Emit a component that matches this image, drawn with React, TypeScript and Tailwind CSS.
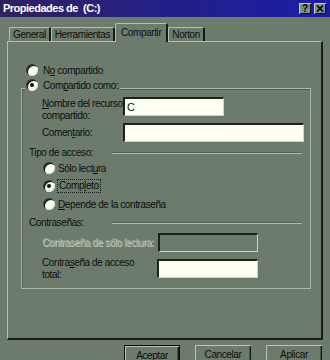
import React from 'react';

const face = 'bg-[#6c7b6c]';

function Radio({ checked }: { checked?: boolean }) {
  return (
    <span className="flex h-[12px] w-[12px] shrink-0 items-center justify-center rounded-full bg-[#fbfbef] shadow-[inset_1px_1px_0_#3d473e,inset_2px_2px_0_#141a14,inset_-1px_-1px_0_#d9e2d8]">
      {checked && <span className="h-[4px] w-[4px] rounded-full bg-[#0c0c0c]" />}
    </span>
  );
}

function Field({ width, value, disabled }: { width: string; value?: string; disabled?: boolean }) {
  return (
    <div
      className={`h-[19px] shrink-0 border-t-2 border-l-2 border-r border-b border-t-[#1b211b] border-l-[#1b211b] border-r-[#c9d4c8] border-b-[#c9d4c8] pl-[2px] text-[11px] leading-[16px] tracking-normal ${width} ${
        disabled ? 'bg-[#6c7b6c]' : 'bg-[#fffff2]'
      }`}
    >
      {value}
    </div>
  );
}

function Separator() {
  return (
    <div className="mr-[8px] flex flex-1 items-center">
      <div className="h-[2px] flex-1 border-t border-b border-t-[#56635a] border-b-[#aebcad]" />
    </div>
  );
}

function Tab({ label, selected }: { label: string; selected?: boolean }) {
  if (selected) {
    return (
      <div
        className={`relative z-10 -mb-[1px] -mx-[2px] flex h-[19px] items-start rounded-t-[2px] border-t border-l border-r-2 border-t-[#b2c0b1] border-l-[#b2c0b1] border-r-[#151a15] ${face} px-[5px] pt-[2px]`}
      >
        {label}
      </div>
    );
  }
  return (
    <div className="flex h-[14px] items-start rounded-t-[2px] border-t border-l border-r-2 border-t-[#b2c0b1] border-l-[#b2c0b1] border-r-[#151a15] px-[3px] pt-0">
      {label}
    </div>
  );
}

function Button({ label, isDefault }: { label: string; isDefault?: boolean }) {
  return (
    <div
      className={`flex h-[23px] w-[56px] items-start justify-center pt-[3px] ${
        isDefault ? 'border border-[#0a0d0a]' : ''
      } shadow-[inset_1px_1px_0_#b8c6b7,inset_-1px_-1px_0_#121712,inset_-2px_-2px_0_#4a564b]`}
    >
      {label}
    </div>
  );
}

export default function App() {
  return (
    <div
      className={`flex h-[360px] w-[330px] flex-col overflow-hidden ${face} font-['Liberation_Sans',Arial,sans-serif] text-[10px] leading-[13px] tracking-[-0.4px] text-[#0d100d]`}
    >
      {/* Title bar */}
      <div className="flex h-[17px] shrink-0 items-center bg-linear-to-r from-[#2e2160] via-[#231f86] to-[#1a1ca8] pl-[3px] pr-[4px]">
        <span className="flex-1 whitespace-nowrap text-[11px] font-bold tracking-[-0.5px] text-white">
          Propiedades de&nbsp;&nbsp;(C:)
        </span>
        <div className="flex gap-[3px]">
          <div className="flex h-[11px] w-[12px] items-center justify-center bg-[#7e8e7f] text-[10px] font-bold leading-none tracking-normal text-black shadow-[inset_1px_1px_0_#c2cfc1,inset_-1px_-1px_0_#111]">
            ?
          </div>
          <div className="flex h-[11px] w-[12px] items-center justify-center bg-[#7e8e7f] shadow-[inset_1px_1px_0_#c2cfc1,inset_-1px_-1px_0_#111]">
            <svg width="8" height="7" viewBox="0 0 8 7">
              <path d="M1 0.5 L7 6.5 M7 0.5 L1 6.5" stroke="#000" strokeWidth="1.6" />
            </svg>
          </div>
        </div>
      </div>

      {/* Tabs */}
      <div className="flex h-[24px] shrink-0 items-end pl-[9px]">
        <Tab label="General" />
        <Tab label="Herramientas" />
        <div className="mx-[2px]">
          <Tab label="Compartir" selected />
        </div>
        <Tab label="Norton" />
      </div>

      {/* Panel */}
      <div className="ml-[7px] h-[299px] w-[316px] shrink-0 border-t border-l border-r-2 border-b-2 border-t-[#b2c0b1] border-l-[#b2c0b1] border-r-[#151a15] border-b-[#151a15] pt-[22px]">
        <div className="ml-[18px] flex h-[12px] items-center gap-[5px]">
          <Radio />
          <span>
            N<span className="underline">o</span> compartido
          </span>
        </div>

        {/* Group box */}
        <div className="mt-[12px] ml-[13px] h-[201px] w-[290px] border border-[#a9b7a8] shadow-[inset_1px_1px_0_#4f5b50]">
          <div className={`-mt-[10px] ml-[3px] flex h-[12px] w-fit items-center gap-[5px] ${face} px-[1px] pr-[2px]`}>
            <Radio checked />
            <span>
              Com<span className="underline">p</span>artido como:
            </span>
          </div>

          <div className="mt-[6px] flex h-[26px] items-start pl-[20px]">
            <div className="w-[81px] whitespace-nowrap pt-[1px] leading-[12px]">
              <span className="underline">N</span>ombre del recurso
              <br />
              compartido:
            </div>
            <Field width="w-[101px]" value="C" />
          </div>

          <div className="flex h-[19px] items-center pl-[20px]">
            <div className="w-[81px]">
              Comen<span className="underline">t</span>ario:
            </div>
            <Field width="w-[181px]" />
          </div>

          <div className="mt-[4px] flex h-[13px] items-center pl-[7px]">
            <div className="w-[83px]">Tipo de acceso:</div>
            <Separator />
          </div>

          <div className="flex h-[18px] items-center gap-[3px] pl-[21px]">
            <Radio />
            <span>
              Sólo lect<span className="underline">u</span>ra
            </span>
          </div>
          <div className="flex h-[18px] items-center gap-[2px] pl-[21px]">
            <Radio checked />
            <span className="border border-dotted border-[#1a1a1a] px-[1px] leading-[12px]">
              Comp<span className="underline">l</span>eto
            </span>
          </div>
          <div className="flex h-[18px] items-center gap-[3px] pl-[21px]">
            <Radio />
            <span>
              <span className="underline">D</span>epende de la contraseña
            </span>
          </div>

          <div className="mt-[3px] flex h-[13px] items-center pl-[7px]">
            <div className="w-[83px]">Contraseñas:</div>
            <Separator />
          </div>

          <div className="mt-[4px] flex h-[19px] items-center pl-[20px]">
            <div className="w-[116px] whitespace-nowrap text-[#97a596] [text-shadow:1px_1px_0_#c6d1c5]">
              Contraseña de sólo lectura:
            </div>
            <Field width="w-[100px]" disabled />
          </div>

          <div className="mt-[5px] flex h-[24px] items-start pl-[20px]">
            <div className="w-[115px] whitespace-nowrap leading-[12px]">
              Contra<span className="underline">s</span>eña de acceso
              <br />
              total:
            </div>
            <div className="mt-[2px]">
              <Field width="w-[101px]" />
            </div>
          </div>
        </div>
      </div>

      {/* Buttons */}
      <div className="mt-[5px] flex justify-end gap-[15px] pr-[8px]">
        <Button label="Aceptar" isDefault />
        <Button label="Cancelar" />
        <Button label="Aplicar" />
      </div>
    </div>
  );
}
